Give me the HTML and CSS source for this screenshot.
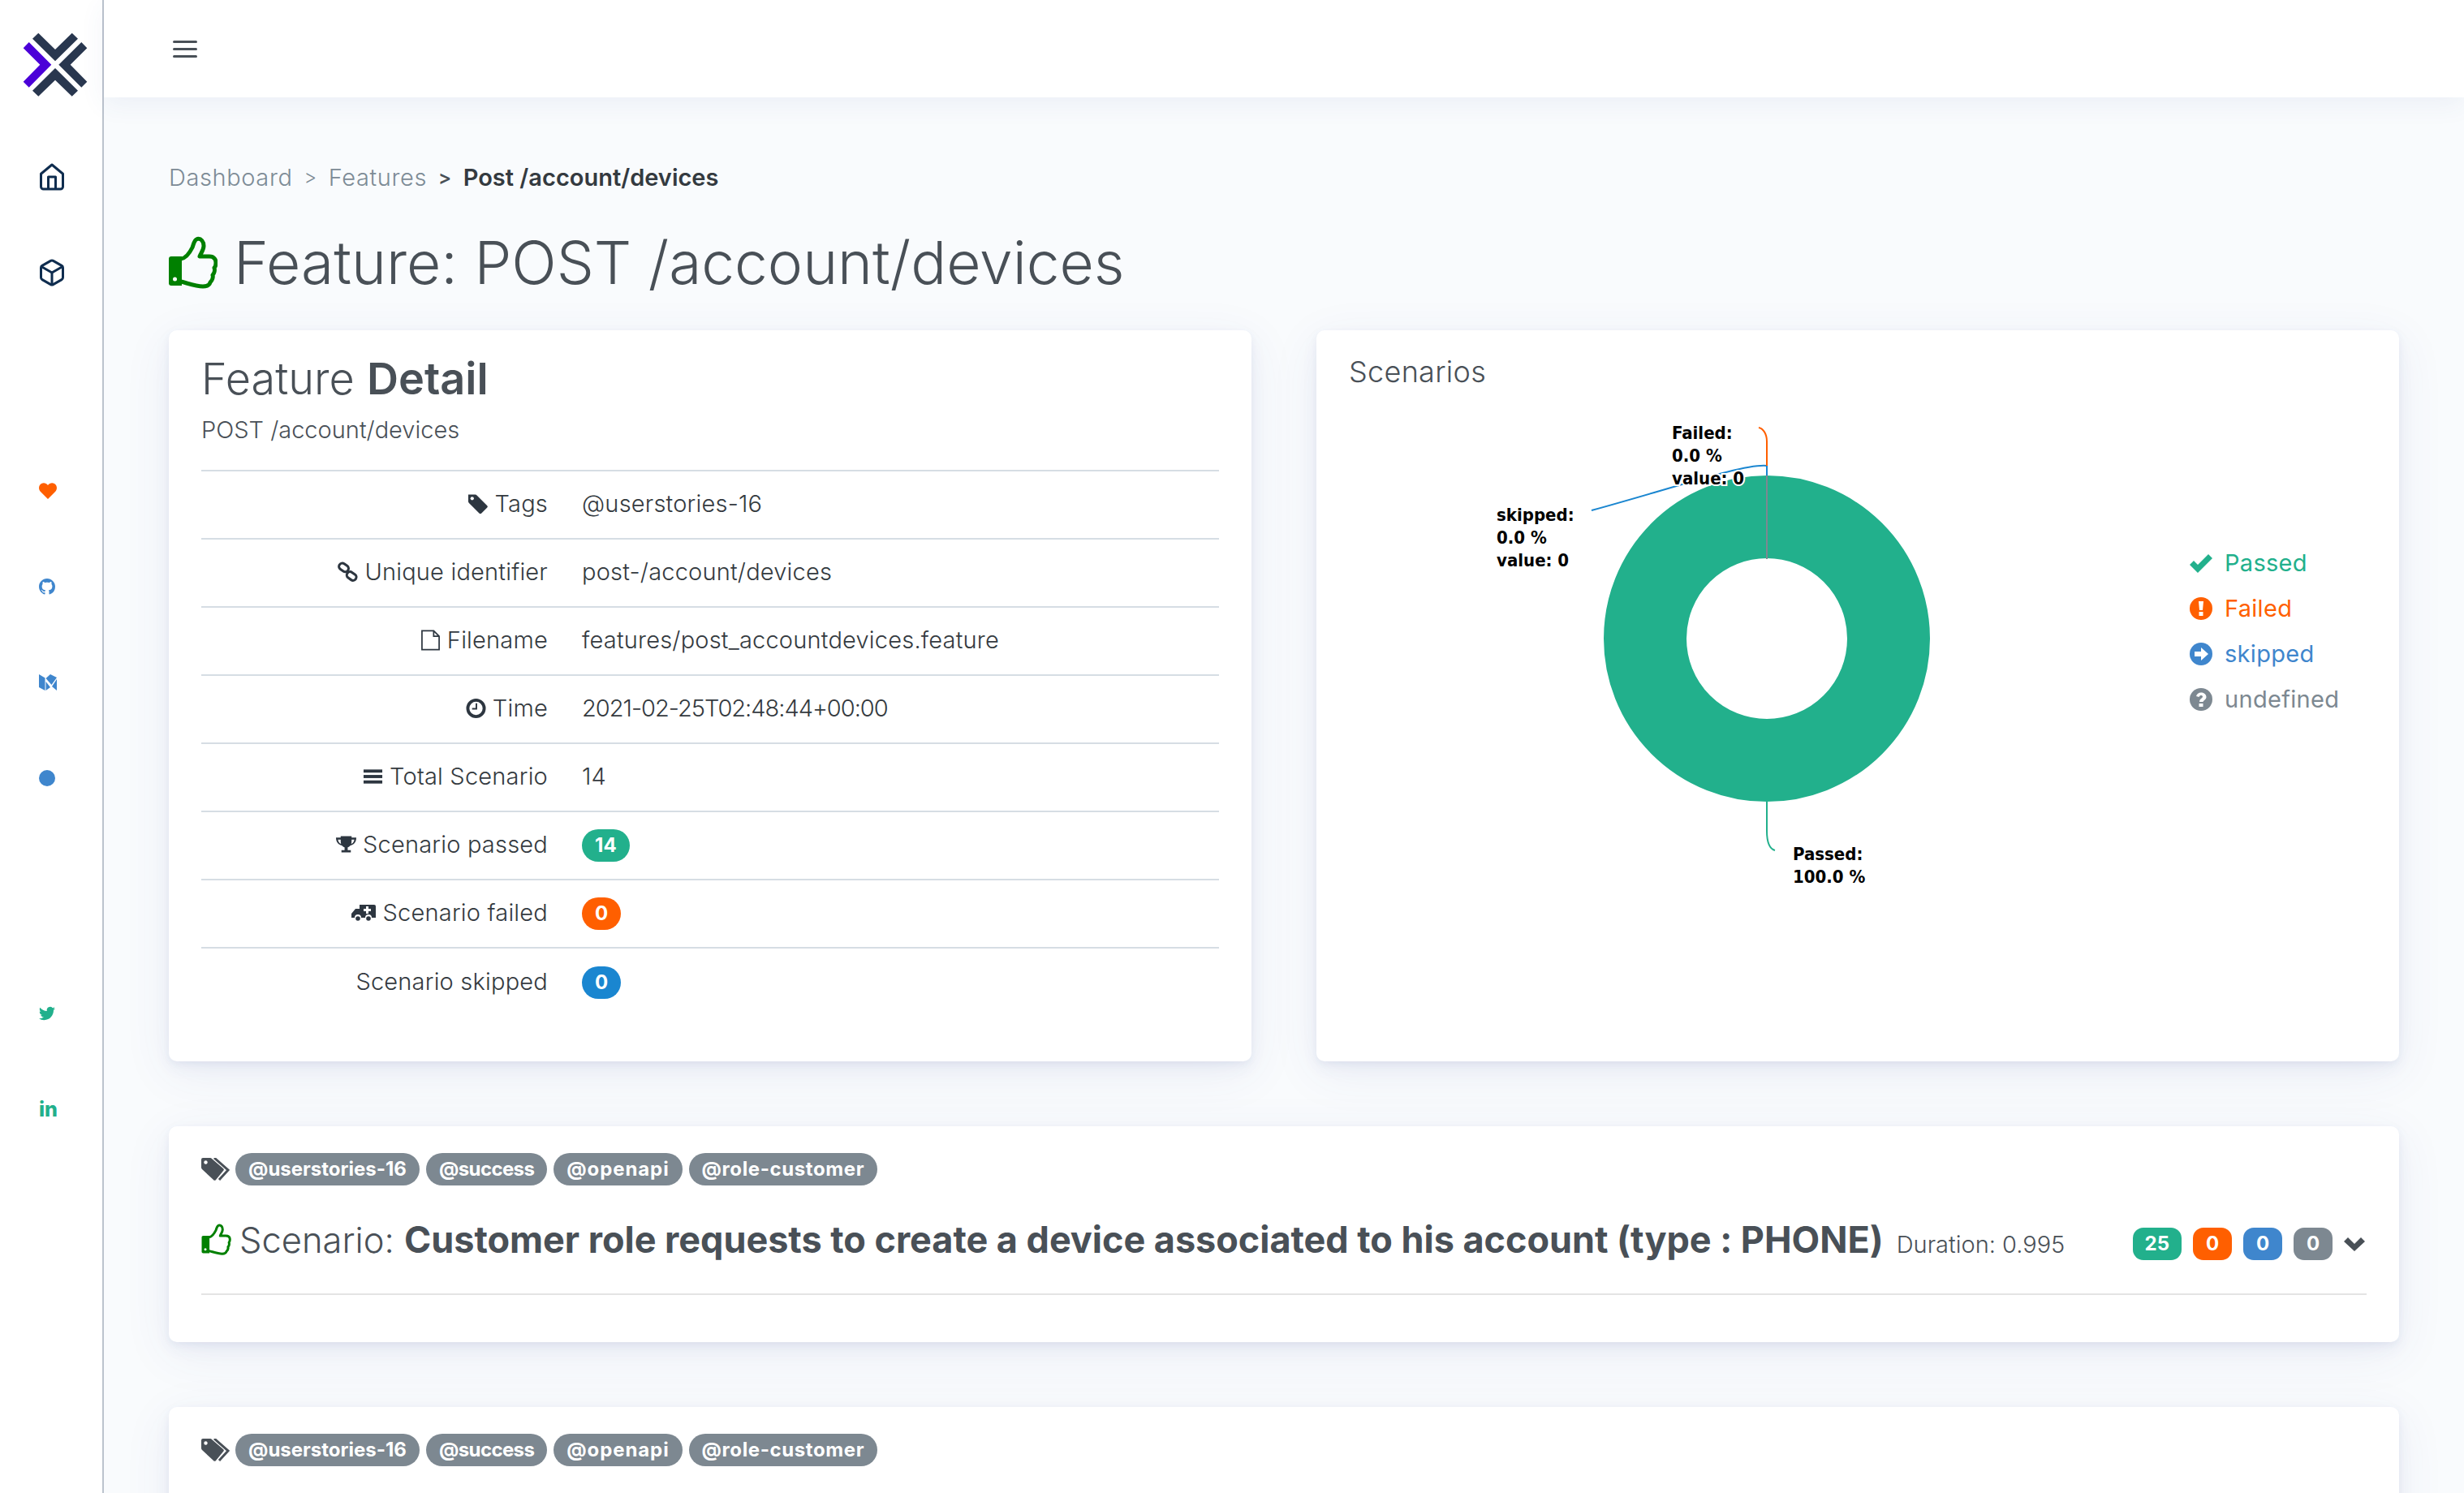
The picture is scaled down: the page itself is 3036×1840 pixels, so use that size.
FILE: index.html
```html
<!DOCTYPE html>
<html lang="en">
<head>
  <meta charset="UTF-8">
  <title>Feature: POST /account/devices</title>
  <link rel="stylesheet" href="styles.css">
</head>
<body>

  <svg class="defs" aria-hidden="true">
    <symbol id="thumb" viewBox="0 0 60 65">
      <path d="M3 25h13v36H3a3 3 0 0 1-3-3V28a3 3 0 0 1 3-3z" fill="#008000"/>
      <circle cx="7.500" cy="53" r="2.500" fill="#fff"/>
      <path d="M15 28C22 27 26 20 29 14 31 9 31 5 35 3.500 40 2.500 43 7 43 12 43 17 40 20 38 25H50C56 25 58 29 58 33 58 36 57 38 56 39 57 42 56 46 54 48 55 51 53 55 51 57 50 61 46 62 42 62 34 62 26 59 15 56" fill="none" stroke="#008000" stroke-width="5" stroke-linejoin="round"/>
    </symbol>
    <symbol id="tags" viewBox="0 0 35 28">
      <path d="M0 2a2 2 0 0 1 2-2h9a3 3 0 0 1 2 1l14 12a2 2 0 0 1 0 3L18 27a2 2 0 0 1-3 0L1 14a3 3 0 0 1-1-2z" fill="#495057"/>
      <circle cx="5.500" cy="5.500" r="2.200" fill="#fff"/>
      <path d="M16 0l17 15-11 12" fill="none" stroke="#495057" stroke-width="3"/>
    </symbol>
  </svg>

  <aside class="sidebar">
    <svg class="logo" viewBox="28 40 80 80">
      <polygon fill="#29374f" points="40,47.700 47.300,40.700 68,61 88.700,40.700 96,47.700 68,75.300"/>
      <polygon fill="#29374f" points="40,111.700 47.300,118.700 68,98.700 88.700,118.700 96,111.700 68,84"/>
      <polygon fill="#4b00d8" points="28.700,59.300 35.700,52 63.300,79.700 35.700,107.700 28.700,100.700 49.300,79.700"/>
      <polygon fill="#29374f" points="107.300,59.300 100.300,52 72.300,79.700 100.300,107.700 107.300,100.700 86.700,79.700"/>
    </svg>

    <nav class="side-nav">
      <svg class="nav-icon" viewBox="2 1 20 22"><path d="M3 9.500 12 2l9 7.500V20a2 2 0 0 1-2 2H5a2 2 0 0 1-2-2z"/><polyline points="9 22 9 12 15 12 15 22"/></svg>
      <svg class="nav-icon nav-icon-box" viewBox="2 1 20 22"><path d="M21 16V8a2 2 0 0 0-1-1.730l-7-4a2 2 0 0 0-2 0l-7 4A2 2 0 0 0 3 8v8a2 2 0 0 0 1 1.730l7 4a2 2 0 0 0 2 0l7-4A2 2 0 0 0 21 16z"/><polyline points="3.270 6.960 12 12.010 20.730 6.960"/><line x1="12" y1="22.080" x2="12" y2="12"/></svg>
    </nav>

    <div class="side-links">
      <div class="side-link"><svg class="heart" viewBox="0 0 22 20"><path d="M11 20 2 11C-1 8-.5 3 3 1c3-1.500 6-.5 8 2 2-2.500 5-3.500 8-2 3.500 2 4 7 1 10z"/></svg></div>
      <div class="side-link"><svg class="github" viewBox="0 0 16 16"><path d="M8 0C3.580 0 0 3.580 0 8c0 3.540 2.290 6.530 5.470 7.590.400.070.550-.170.550-.380 0-.190-.010-.820-.010-1.490-2.010.370-2.530-.490-2.690-.940-.090-.230-.480-.940-.820-1.130-.280-.150-.680-.520-.010-.530.630-.010 1.080.580 1.230.820.720 1.210 1.870.870 2.330.660.070-.520.280-.870.510-1.070-1.780-.200-3.640-.890-3.640-3.950 0-.870.310-1.590.820-2.150-.080-.200-.360-1.020.080-2.120 0 0 .670-.210 2.200.820.640-.180 1.320-.270 2-.270.680 0 1.360.090 2 .270 1.530-1.040 2.200-.820 2.200-.820.440 1.100.160 1.920.080 2.120.510.560.820 1.270.820 2.150 0 3.070-1.870 3.750-3.650 3.950.290.250.540.730.540 1.480 0 1.070-.010 1.930-.010 2.200 0 .210.150.460.550.380A8.013 8.013 0 0016 8c0-4.420-3.580-8-8-8z"/></svg></div>
      <div class="side-link"><svg class="medium" viewBox="0 0 22 20"><polygon points="0,0 7.500,4.500 7.500,20 0,16"/><polygon points="8.500,5 14,0 22,4 15.500,13"/><polygon points="8.500,9 14,16 8.500,20"/><polygon points="16,15 22,6 22,20"/></svg></div>
      <div class="side-link"><span class="dot"></span></div>
    </div>

    <div class="side-social">
      <div class="side-link"><svg class="twitter" viewBox="0 0 24 24"><path d="M23.953 4.570a10 10 0 01-2.825.775 4.958 4.958 0 002.163-2.723c-.951.555-2.005.959-3.127 1.184a4.920 4.920 0 00-8.384 4.482C7.690 8.095 4.067 6.130 1.640 3.162a4.822 4.822 0 00-.666 2.475c0 1.710.870 3.213 2.188 4.096a4.904 4.904 0 01-2.228-.616v.060a4.923 4.923 0 003.946 4.827 4.996 4.996 0 01-2.212.085 4.936 4.936 0 004.604 3.417 9.867 9.867 0 01-6.102 2.105c-.390 0-.779-.023-1.170-.067a13.995 13.995 0 007.557 2.209c9.053 0 13.998-7.496 13.998-13.985 0-.210 0-.420-.015-.630A9.935 9.935 0 0024 4.590z"/></svg></div>
      <div class="side-link"><span class="linkedin">in</span></div>
    </div>
  </aside>

  <div class="main">
    <header class="topbar">
      <div class="burger"><span></span><span></span><span></span></div>
    </header>

    <div class="content">
      <div class="breadcrumb">
        <span>Dashboard</span><span class="sep">&gt;</span><span>Features</span><span class="sep sep-bold">&gt;</span><b>Post /account/devices</b>
      </div>

      <h1 class="page-title"><svg class="thumb-big"><use href="#thumb"/></svg>Feature: POST /account/devices</h1>

      <div class="two-cols">
        <section class="card detail">
          <h2 class="detail-title">Feature <b>Detail</b></h2>
          <p class="detail-sub">POST /account/devices</p>
          <table class="detail-table">
            <tr>
              <th><svg class="row-icon" viewBox="0 0 26 26"><path d="M1 1h9a3 3 0 0 1 2 1l13 13a2 2 0 0 1 0 3l-7 7a2 2 0 0 1-3 0L2 12a3 3 0 0 1-1-2z"/><circle cx="6" cy="6" r="2.200" fill="#fff"/></svg> Tags</th>
              <td>@userstories-16</td>
            </tr>
            <tr>
              <th><svg class="row-icon" viewBox="0 0 26 26"><g fill="none" stroke="#2d3640" stroke-width="3.200"><rect x="1.500" y="3" width="13" height="8.500" rx="4.200" transform="rotate(35 8 7)"/><rect x="11.500" y="14" width="13" height="8.500" rx="4.200" transform="rotate(35 18 18)"/></g></svg> Unique identifier</th>
              <td>post-/account/devices</td>
            </tr>
            <tr>
              <th><svg class="row-icon" viewBox="0 0 26 26"><path d="M2 1h15l7 7v17H2zM17 1v7h7" fill="none" stroke="#2d3640" stroke-width="1.800"/></svg> Filename</th>
              <td>features/post_accountdevices.feature</td>
            </tr>
            <tr>
              <th><svg class="row-icon" viewBox="0 0 26 26"><circle cx="13" cy="13" r="10.500" fill="none" stroke="#2d3640" stroke-width="4"/><path d="M14.500 6.500v8H8v-2h4.500v-6z"/></svg> Time</th>
              <td class="value-time">2021-02-25T02:48:44+00:00</td>
            </tr>
            <tr>
              <th><svg class="row-icon" viewBox="0 0 26 26"><rect x="1" y="4" width="24" height="4"/><rect x="1" y="11" width="24" height="4"/><rect x="1" y="18" width="24" height="4"/></svg> Total Scenario</th>
              <td>14</td>
            </tr>
            <tr>
              <th><svg class="row-icon" viewBox="0 0 26 26"><path d="M6 2h14v2h6c0 6-3 9-7.500 10-1 1-2.500 2-3.500 2.500V20h4v3H7v-3h4v-3.500C10 16 8.500 15 7.500 14 3 13 0 10 0 4h6zM2.500 6.500C3 9 4 11 6.500 12 6 10.500 6 8.500 6 6.500zM20 6.500c0 2 0 4-.5 5.500C22 11 23 9 23.500 6.500z"/></svg> Scenario passed</th>
              <td><span class="pill pill-green">14</span></td>
            </tr>
            <tr>
              <th><svg class="row-icon ambulance" viewBox="0 0 30 22"><path d="M10 1h18a2 2 0 0 1 2 2v14h-5a4 4 0 0 0-8 0h-5a4 4 0 0 0-8 0H0v-5l5-6h5z"/><circle cx="8" cy="18" r="2.800"/><circle cx="21" cy="18" r="2.800"/><path d="M18 3h3v3h3v3h-3v3h-3V9h-3V6h3z" fill="#fff"/></svg> Scenario failed</th>
              <td><span class="pill pill-orange">0</span></td>
            </tr>
            <tr>
              <th>Scenario skipped</th>
              <td><span class="pill pill-blue">0</span></td>
            </tr>
          </table>
        </section>

        <section class="card scenarios">
          <h3 class="scenarios-title">Scenarios</h3>
          <svg class="chart" viewBox="1622 408 1334 901">
            <circle class="donut" cx="2177" cy="788" r="150"/>
            <line x1="2177" y1="587" x2="2177" y2="690" stroke="#7d8891" stroke-width="2"/>
            <path d="M2177 587V575C2150 572 2060 603 1961 630" fill="none" stroke="#1a86d0" stroke-width="2"/>
            <path d="M2177 575V545C2177 535 2172 529 2167 528" fill="none" stroke="#ff5f00" stroke-width="2"/>
            <path d="M2177 989V1025C2177 1040 2180 1047 2187 1049" fill="none" stroke="#22b08c" stroke-width="2"/>
            <g class="chart-label">
              <text x="2060" y="542">Failed:</text>
              <text x="2060" y="570">0.0 %</text>
              <text x="2060" y="598">value: 0</text>
              <text x="1844" y="643">skipped:</text>
              <text x="1844" y="671">0.0 %</text>
              <text x="1844" y="699">value: 0</text>
              <text x="2209" y="1061">Passed:</text>
              <text x="2209" y="1089">100.0 %</text>
            </g>
          </svg>
          <ul class="legend">
            <li class="c-green"><svg class="legend-icon" viewBox="0 0 28 24"><path d="M0 14l5-5 5 5L23 1l5 5L10 24z"/></svg>Passed</li>
            <li class="c-orange"><svg class="legend-icon" viewBox="0 0 28 28"><circle cx="14" cy="14" r="14"/><path d="M11 5h6l-1 11h-4zM11.500 18h5v5h-5z" fill="#fff"/></svg>Failed</li>
            <li class="c-blue"><svg class="legend-icon" viewBox="0 0 28 28"><circle cx="14" cy="14" r="14"/><path d="M14 6l9 8-9 8v-5H6v-6h8z" fill="#fff"/></svg>skipped</li>
            <li class="c-grey"><svg class="legend-icon" viewBox="0 0 28 28"><circle cx="14" cy="14" r="14"/><path d="M8 10c1-3 3-4.500 6-4.500 4 0 6.500 2.500 6.500 5.500 0 3-3.500 4-4 6h-4.500c0-4 4-4.500 4-6.500 0-1-1-1.500-2-1.500s-2 .5-2.500 2zM11.500 19h5v4h-5z" fill="#fff"/></svg>undefined</li>
          </ul>
        </section>
      </div>

      <section class="card scenario">
        <div class="tags">
          <svg class="tags-icon"><use href="#tags"/></svg>
          <span class="tag">@userstories-16</span>
          <span class="tag tag-success">@success</span>
          <span class="tag tag-openapi">@openapi</span>
          <span class="tag tag-role">@role-customer</span>
        </div>
        <div class="scenario-head">
          <svg class="thumb-small"><use href="#thumb"/></svg>
          <span class="scenario-name">Scenario: <b>Customer role requests to create a device associated to his account (type : PHONE)</b></span>
          <span class="duration">Duration: 0.995</span>
          <span class="counts">
            <span class="count c-bg-green">25</span>
            <span class="count c-bg-orange">0</span>
            <span class="count c-bg-blue">0</span>
            <span class="count c-bg-grey">0</span>
            <svg class="chevron" viewBox="0 0 26 17"><path d="M0 5l5-5 8 8 8-8 5 5-13 12z"/></svg>
          </span>
        </div>
        <hr class="scenario-line">
      </section>

      <section class="card scenario">
        <div class="tags">
          <svg class="tags-icon"><use href="#tags"/></svg>
          <span class="tag">@userstories-16</span>
          <span class="tag tag-success">@success</span>
          <span class="tag tag-openapi">@openapi</span>
          <span class="tag tag-role">@role-customer</span>
        </div>
      </section>
    </div>
  </div>

</body>
</html>
```

FILE: styles.css
```css
* {
  box-sizing: border-box;
}

html, body {
  height: 100%;
  margin: 0;
  overflow: hidden;
}

body {
  display: flex;
  font-family: Inter, "Open Sans", sans-serif;
  font-weight: 300;
  font-size: 28px;
  color: #495057;
  background-color: #f9fbfd;
}

.defs {
  width: 0;
  height: 0;
  position: absolute;
}

/* sidebar */
.sidebar {
  flex: 0 0 128px;
  height: 100%;
  background-color: #fff;
  border-right: 2px solid #bcc3cd;
  display: flex;
  flex-direction: column;
}

.logo {
  display: block;
  width: 80px;
  height: 80px;
  margin: 40px 0 0 28px;
}

.side-nav {
  display: flex;
  flex-direction: column;
  gap: 86px;
  margin: 81px 0 0 49px;
}

.nav-icon {
  display: block;
  width: 30px;
  height: 34px;
  fill: none;
  stroke: #0f2d4f;
  stroke-width: 2;
  stroke-linejoin: round;
}

.nav-icon-box {
  margin-top: -2px;
}

.side-links {
  display: flex;
  flex-direction: column;
  gap: 98px;
  margin-top: 242px;
}

.side-social {
  display: flex;
  flex-direction: column;
  gap: 98px;
  margin-top: 270px;
}

.side-link {
  height: 20px;
  display: flex;
  align-items: center;
  padding-left: 48px;
}

.heart {
  width: 22px;
  height: 20px;
  fill: #ff5f00;
}

.github {
  width: 20px;
  height: 20px;
  fill: #3f86cd;
}

.medium {
  width: 22px;
  height: 20px;
  fill: #3f86cd;
}

.dot {
  width: 20px;
  height: 20px;
  border-radius: 50%;
  background-color: #3f86cd;
}

.twitter {
  width: 20px;
  height: 20px;
  fill: #22b08c;
}

.linkedin {
  font-size: 25px;
  font-weight: 800;
  line-height: 20px;
  color: #22b08c;
}

/* main */
.main {
  flex: 1;
  min-width: 0;
}

.topbar {
  height: 120px;
  background-color: #fff;
  padding: 50px 0 0 85px;
  box-shadow: 0 8px 30px rgba(60, 80, 150, 0.07);
}

.burger {
  width: 30px;
  display: flex;
  flex-direction: column;
  gap: 6px;
}

.burger span {
  height: 3px;
  border-radius: 2px;
  background-color: #495057;
}

.content {
  padding: 80px 80px 0;
}

.breadcrumb {
  display: flex;
  align-items: center;
  height: 36px;
  font-size: 29px;
  letter-spacing: 0.6px;
  color: #7d8b96;
}

.breadcrumb .sep {
  margin: 0 14px;
  font-size: 24px;
}

.breadcrumb .sep-bold {
  font-weight: 600;
  color: #495057;
}

.breadcrumb b {
  font-weight: 600;
  letter-spacing: 0;
  color: #343a40;
}

.page-title {
  display: flex;
  align-items: center;
  margin: 44px 0 0;
  height: 86px;
  font-size: 73px;
  font-weight: 300;
}

.thumb-big {
  width: 60px;
  height: 65px;
  margin-right: 20px;
}

.card {
  background-color: #fff;
  border-radius: 10px;
  box-shadow: 0 14px 60px rgba(60, 80, 150, 0.08), 0 8px 20px rgba(60, 80, 150, 0.06), 0 3px 8px rgba(60, 80, 150, 0.05);
}

.two-cols {
  display: grid;
  grid-template-columns: 1334px 1334px;
  gap: 80px;
  margin-top: 41px;
}

.detail {
  height: 901px;
  padding: 29px 40px 0;
}

.detail-title {
  margin: 0;
  font-size: 54px;
  line-height: 62px;
  font-weight: 300;
}

.detail-title b {
  font-weight: 600;
}

.detail-sub {
  margin: 12px 0 0;
  font-size: 29px;
  line-height: 40px;
}

.detail-table {
  width: 100%;
  margin-top: 29px;
  border-collapse: collapse;
  border-top: 2px solid #d6dde4;
}

.detail-table th, .detail-table td {
  height: 84px;
  padding: 0 20px 3px 22px;
  font-weight: 300;
  font-size: 29px;
  letter-spacing: 0.2px;
  border-bottom: 2px solid #d6dde4;
  color: #343a40;
}

.detail-table tr:last-child th, .detail-table tr:last-child td {
  border-bottom: none;
}

.detail-table th {
  width: 447px;
  text-align: right;
}

.detail-table td {
  text-align: left;
}

.detail-table .value-time {
  letter-spacing: -1px;
}

.row-icon {
  width: 25px;
  height: 26px;
  vertical-align: -3px;
  fill: #2d3640;
}

.ambulance {
  width: 30px;
  height: 22px;
  vertical-align: -1px;
}

.pill {
  display: inline-block;
  min-width: 48px;
  height: 40px;
  margin-top: 3px;
  padding: 0 16px;
  border-radius: 20px;
  font-size: 24px;
  font-weight: 700;
  line-height: 40px;
  text-align: center;
  color: #fff;
}

.pill-green {
  background-color: #22b08c;
}

.pill-orange {
  background-color: #ff5f00;
}

.pill-blue {
  background-color: #1a86d0;
}

/* chart card */
.scenarios {
  height: 901px;
  position: relative;
}

.scenarios-title {
  margin: 0;
  padding: 30px 40px 0;
  font-size: 36px;
  letter-spacing: 0.3px;
  line-height: 42px;
  font-weight: 300;
}

.chart {
  position: absolute;
  left: 0;
  top: 0;
  width: 100%;
  height: 100%;
}

.donut {
  fill: none;
  stroke: #22b08c;
  stroke-width: 102;
}

.chart-label text {
  font-family: "DejaVu Sans Condensed", "DejaVu Sans", sans-serif;
  font-stretch: condensed;
  font-size: 22px;
  font-weight: 700;
  fill: #000;
  stroke: #fff;
  stroke-width: 4px;
  paint-order: stroke;
}

.legend {
  position: absolute;
  left: 1076px;
  top: 259px;
  margin: 0;
  padding: 0;
  list-style: none;
  font-size: 29px;
  letter-spacing: 0.3px;
  line-height: 56px;
  font-weight: 400;
}

.legend li {
  display: flex;
  align-items: center;
  height: 56px;
}

.legend-icon {
  width: 28px;
  height: 28px;
  margin-right: 15px;
  fill: currentColor;
}

.c-green {
  color: #22b08c;
}

.c-orange {
  color: #ff5f00;
}

.c-blue {
  color: #3f86cd;
}

.c-grey {
  color: #7d8891;
}

/* scenario cards */
.scenario {
  margin-top: 80px;
  padding: 33px 40px 0;
  height: 266px;
}

.scenario + .scenario {
  height: 300px;
}

.tags {
  display: flex;
  align-items: center;
  gap: 8px;
  height: 40px;
}

.tags-icon {
  width: 35px;
  height: 28px;
  margin-right: -1px;
}

.tag {
  height: 40px;
  padding: 0 16px;
  border-radius: 20px;
  background-color: #7d8891;
  color: #fff;
  font-size: 24px;
  font-weight: 700;
  line-height: 40px;
}

.tag-success {
  letter-spacing: -0.6px;
}

.tag-openapi {
  letter-spacing: 0.9px;
}

.tag-role {
  letter-spacing: 0.6px;
}

.scenario-head {
  display: flex;
  align-items: center;
  margin-top: 39px;
  height: 54px;
}

.thumb-small {
  width: 37px;
  height: 39px;
  margin-right: 10px;
}

.scenario-name {
  font-size: 43.500px;
  white-space: nowrap;
}

.scenario-name b {
  font-size: 45px;
  font-weight: 700;
  letter-spacing: -0.03px;
}

.duration {
  margin: 12px 0 0 16px;
  font-size: 29px;
  white-space: nowrap;
}

.counts {
  margin: 12px 2px 0 auto;
  display: flex;
  align-items: center;
  gap: 14px;
}

.count {
  min-width: 48px;
  height: 40px;
  padding: 0 15px;
  border-radius: 13px;
  color: #fff;
  font-size: 24px;
  font-weight: 700;
  line-height: 40px;
  text-align: center;
}

.c-bg-green {
  background-color: #22b08c;
}

.c-bg-orange {
  background-color: #ff5f00;
}

.c-bg-blue {
  background-color: #3f86cd;
}

.c-bg-grey {
  background-color: #7d8891;
}

.chevron {
  width: 26px;
  height: 17px;
  fill: #495057;
}

.scenario-line {
  margin: 40px 0 0;
  border: none;
  border-top: 2px solid #e4e4e4;
}
```
